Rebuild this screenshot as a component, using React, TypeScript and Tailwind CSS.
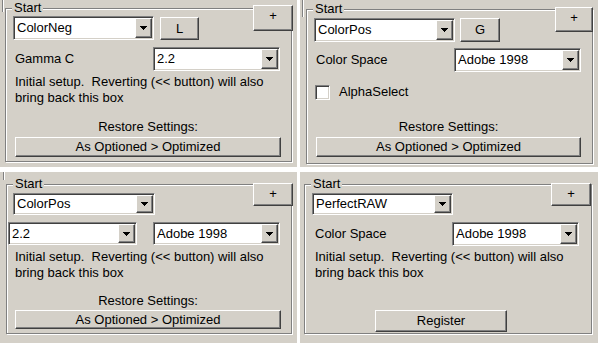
import React from 'react'

const raised = "bg-[#d4d0c8] border border-t-white border-l-white border-b-[#404040] border-r-[#404040] shadow-[inset_-1px_-1px_0_#808080]"
const sunken = "border border-t-[#808080] border-l-[#808080] border-b-white border-r-white"
const sunkenInner = "shadow-[inset_1px_1px_0_#404040,inset_-1px_-1px_0_#d4d0c8]"

function Arrow() {
    return (
        <svg width="7" height="4" viewBox="0 0 7 4" shapeRendering="crispEdges">
            <path d="M0 0h7v1h-1v1h-1v1h-1v1h-1v-1h-1v-1h-1v-1h-1z" fill="#000" />
        </svg>
    )
}

function Combo({ value, className }: { value: string, className: string }) {
    return (
        <div className={`${sunken} ${className} flex`}>
            <div className={`${sunkenInner} flex flex-1 items-center bg-white p-[1px]`}>
                <span className="flex-1 pl-[2px] leading-[16px]">{value}</span>
                <div className={`${raised} flex h-full w-[17px] items-center justify-center`}>
                    <Arrow />
                </div>
            </div>
        </div>
    )
}

function Button({ className, children }: { className: string, children: React.ReactNode }) {
    return (
        <div className={`${raised} ${className} flex items-center justify-center leading-[16px]`}>
            {children}
        </div>
    )
}

function GroupBox({ className, children }: { className: string, children: React.ReactNode }) {
    return (
        <div className={`relative border border-[#808080] shadow-[inset_1px_1px_0_#fff,1px_1px_0_#fff] ${className}`}>
            <span className="absolute left-[6px] top-[-9px] bg-[#d4d0c8] px-[2px] leading-[16px]">Start</span>
            {children}
        </div>
    )
}

// remnant of the outer frame edge, cut off at the top of every shot
function Edge({ className }: { className: string }) {
    return <div className={`absolute top-0 w-[2px] border-l border-l-[#808080] border-r border-r-white ${className}`} />
}

function Plus({ className }: { className: string }) {
    return (
        <div className={`${raised} ${className} absolute flex items-start justify-center pt-[3px] text-[13px] leading-[14px]`}>
            +
        </div>
    )
}

function InitialText({ className }: { className: string }) {
    return (
        <p className={`whitespace-pre leading-[16px] ${className}`}>
            {"Initial setup.  Reverting (<< button) will also"}
            <br />
            {"bring back this box"}
        </p>
    )
}

function Restore({ className }: { className: string }) {
    return (
        <div className={`flex flex-col ${className}`}>
            <p className="text-center leading-[16px]">Restore Settings:</p>
            <Button className="mt-[2px] h-[20px] w-full">As Optioned &gt; Optimized</Button>
        </div>
    )
}

export default function App() {
    return (
        <div className="grid h-[343px] w-[598px] grid-cols-[297px_298px] grid-rows-[167px_171px] gap-x-[3px] gap-y-[5px] bg-white font-['Liberation_Sans',Arial,sans-serif] text-[13px] text-black">

            {/* top left */}
            <div className="relative bg-[#d4d0c8] pl-[5px] pt-[8px]">
                <Edge className="left-[2px] h-[12px]" />
                <GroupBox className="h-[154px] w-[287px]">
                    <div className="flex flex-col pl-[7px] pt-[7px]">
                        <div className="flex items-start gap-[6px]">
                            <Combo value="ColorNeg" className="h-[24px] w-[141px]" />
                            <Button className="mt-[1px] h-[23px] w-[39px]">L</Button>
                        </div>
                        <div className="mt-[7px] flex items-center">
                            <span className="w-[140px] pl-[2px]">Gamma C</span>
                            <Combo value="2.2" className="h-[24px] w-[127px]" />
                        </div>
                        <InitialText className="mt-[3px] pl-[2px]" />
                        <Restore className="ml-[2px] mt-[13px] w-[266px]" />
                    </div>
                </GroupBox>
                <Plus className="left-[253px] top-[5px] h-[26px] w-[40px]" />
            </div>

            {/* top right */}
            <div className="relative bg-[#d4d0c8] pl-[6px] pt-[9px]">
                <Edge className="left-[2px] h-[17px]" />
                <GroupBox className="h-[155px] w-[287px]">
                    <div className="flex flex-col pl-[7px] pt-[8px]">
                        <div className="flex items-start gap-[5px]">
                            <Combo value="ColorPos" className="h-[24px] w-[141px]" />
                            <Button className="h-[24px] w-[40px]">G</Button>
                        </div>
                        <div className="mt-[6px] flex items-center">
                            <span className="w-[140px] pl-[2px]">Color Space</span>
                            <Combo value="Adobe 1998" className="h-[24px] w-[127px]" />
                        </div>
                        <div className="mt-[12px] flex h-[16px] items-center pl-[1px]">
                            <div className={`${sunken} h-[15px] w-[15px]`}>
                                <div className={`${sunkenInner} h-full w-full bg-white`} />
                            </div>
                            <span className="ml-[9px] leading-[16px]">AlphaSelect</span>
                        </div>
                        <Restore className="ml-[2px] mt-[19px] w-[265px]" />
                    </div>
                </GroupBox>
                <Plus className="left-[255px] top-[7px] h-[25px] w-[38px]" />
            </div>

            {/* bottom left */}
            <div className="relative bg-[#d4d0c8] pl-[6px] pt-[12px]">
                <Edge className="left-[3px] h-[8px]" />
                <GroupBox className="h-[150px] w-[286px]">
                    <div className="flex flex-col pl-[1px] pt-[8px]">
                        <Combo value="ColorPos" className="ml-[5px] h-[22px] w-[142px]" />
                        <div className="mt-[7px] flex items-center gap-[16px]">
                            <Combo value="2.2" className="h-[23px] w-[129px]" />
                            <Combo value="Adobe 1998" className="h-[23px] w-[127px]" />
                        </div>
                        <InitialText className="ml-[7px] mt-[4px]" />
                        <div className="ml-[7px] mt-[12px] flex w-[266px] flex-col">
                            <p className="text-center leading-[16px]">Restore Settings:</p>
                            <Button className="mt-[1px] h-[19px] w-full">As Optioned &gt; Optimized</Button>
                        </div>
                    </div>
                </GroupBox>
                <Plus className="left-[253px] top-[11px] h-[23px] w-[40px]" />
            </div>

            {/* bottom right */}
            <div className="relative bg-[#d4d0c8] pl-[4px] pt-[12px]">
                <GroupBox className="h-[150px] w-[288px]">
                    <div className="flex flex-col pl-[7px] pt-[8px]">
                        <Combo value="PerfectRAW" className="h-[22px] w-[141px]" />
                        <div className="mt-[7px] flex items-center">
                            <span className="w-[140px] pl-[3px]">Color Space</span>
                            <Combo value="Adobe 1998" className="h-[24px] w-[127px]" />
                        </div>
                        <InitialText className="mt-[3px] pl-[3px]" />
                        <Button className="ml-[63px] mt-[29px] h-[22px] w-[132px]">Register</Button>
                    </div>
                </GroupBox>
                <Plus className="left-[251px] top-[11px] h-[23px] w-[40px]" />
            </div>
        </div>
    )
}
